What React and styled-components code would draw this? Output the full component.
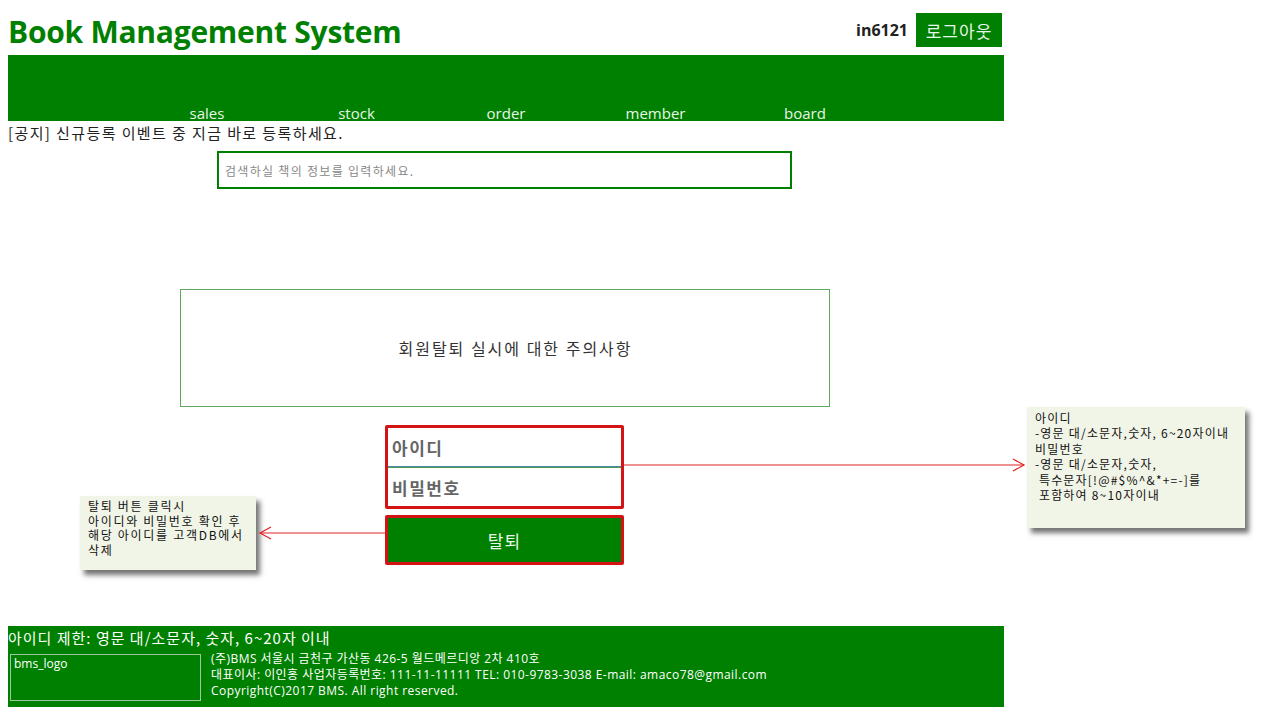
import styled, { createGlobalStyle } from 'styled-components';

const GlobalStyle = createGlobalStyle`
  body {
    margin: 8px;
    background: #fff;
    font-family: "Open Sans", "Noto Sans CJK KR", sans-serif;
    color: #222;
  }
  * { box-sizing: border-box; }
`;

const Stage = styled.div`
  position: relative;
  width: 1264px;
`;

const Wrapper = styled.div`
  width: 996px;
`;

const Header = styled.header`
  display: flex;
  justify-content: space-between;
  align-items: center;
  height: 47px;
`;

const Title = styled.h1`
  margin: 0;
  font-size: 30px;
  font-weight: 700;
  color: #008000;
  letter-spacing: -0.25px;
`;

const UserBox = styled.div`
  display: flex;
  align-items: center;
  gap: 8px;
  margin-right: 2px;
  margin-top: -3px;
`;

const UserId = styled.span`
  font-size: 16px;
  font-weight: 700;
  color: #222;
`;

const LogoutButton = styled.button`
  height: 34px;
  width: 86px;
  border: none;
  background: #008000;
  color: #e8f5e8;
  font-family: "Noto Sans CJK KR", sans-serif;
  font-size: 17px;
  letter-spacing: 1px;
  padding: 0;
`;

const Nav = styled.nav`
  height: 66px;
  background: #008000;
  display: flex;
  justify-content: center;
  align-items: flex-end;
`;

const NavItem = styled.span`
  width: 149.5px;
  text-align: center;
  color: #e8f5e8;
  font-size: 15px;
  line-height: 18px;
  margin-bottom: -1px;
`;

const Notice = styled.p`
  margin: 2px 0 0;
  font-family: "Noto Sans CJK KR", sans-serif;
  font-size: 15px;
  letter-spacing: 1.4px;
  line-height: 20px;
  color: #222;
`;

const SearchRow = styled.div`
  display: flex;
  justify-content: center;
  margin-top: 8px;
  padding-right: 3px;
`;

const SearchInput = styled.input`
  width: 575px;
  height: 38px;
  border: 2px solid #008000;
  padding: 0 6px;
  font-family: "Noto Sans CJK KR", sans-serif;
  font-size: 12px;
  letter-spacing: 1.3px;
  outline: none;
  &::placeholder { color: #888; }
`;

const Center = styled.div`
  display: flex;
  flex-direction: column;
  align-items: center;
  padding-right: 3px;
`;

const CautionBox = styled.div`
  margin-top: 100px;
  width: 650px;
  height: 118px;
  border: 1px solid #5fa65f;
  display: flex;
  align-items: center;
  justify-content: center;
  padding-left: 22px;
  font-family: "Noto Sans CJK KR", sans-serif;
  font-size: 16px;
  letter-spacing: 2px;
  color: #333;
`;

const InputGroup = styled.div`
  margin-top: 18px;
  width: 239px;
  border: 3px solid #d41414;
  border-radius: 2px;
  display: flex;
  flex-direction: column;
`;

const Field = styled.input`
  height: 39px;
  border: none;
  border-bottom: ${(p) => (p.$last ? 'none' : '1px solid #4a8aa8')};
  border-top: ${(p) => (p.$last ? '1px solid #4f9a4f' : 'none')};
  padding: 0 4px;
  font-family: "Noto Sans CJK KR", sans-serif;
  font-size: 17px;
  font-weight: 700;
  letter-spacing: 1.5px;
  outline: none;
  &::placeholder { color: #666; }
`;

const WithdrawButton = styled.button`
  margin-top: 6px;
  width: 239px;
  height: 50px;
  background: #008000;
  border: 3px solid #d41414;
  border-radius: 2px;
  color: #eaf7ea;
  font-family: "Noto Sans CJK KR", sans-serif;
  font-size: 17px;
  letter-spacing: 1px;
`;

const Footer = styled.footer`
  margin-top: 61px;
  background: #008000;
  height: 81px;
  padding: 2px 2px 0;
  color: #fff;
`;

const FooterTitle = styled.div`
  font-family: "Noto Sans CJK KR", sans-serif;
  font-size: 15px;
  letter-spacing: 1px;
  line-height: 20px;
  margin-left: -2px;
`;

const FooterRow = styled.div`
  display: flex;
  gap: 10px;
  margin-top: 6px;
`;

const LogoBox = styled.div`
  width: 191px;
  height: 47px;
  border: 1px solid #a0c8a0;
  padding: 1px 3px;
  font-size: 12px;
  line-height: 16px;
`;

const FooterInfo = styled.div`
  font-size: 12px;
  letter-spacing: 0.45px;
  line-height: 16px;
  margin-top: -3px;
  font-family: "Open Sans", "Noto Sans CJK KR", sans-serif;
`;

const Memo = styled.div`
  position: absolute;
  left: ${(p) => p.$left}px;
  top: ${(p) => p.$top}px;
  width: ${(p) => p.$w}px;
  height: ${(p) => p.$h}px;
  background: #f1f5e8;
  box-shadow: 4px 5px 5px rgba(0, 0, 0, 0.55);
  padding: 3px 8px;
  font-family: "Noto Sans CJK KR", sans-serif;
  font-size: 12px;
  letter-spacing: ${(p) => p.$ls}px;
  line-height: ${(p) => p.$lh}px;
  color: #111;
  white-space: pre;
`;

const Arrows = styled.svg`
  position: absolute;
  left: 0;
  top: 0;
  pointer-events: none;
`;

const navItems = ['sales', 'stock', 'order', 'member', 'board'];

export default function App() {
  return (
    <Stage>
      <GlobalStyle />
      <Wrapper>
        <Header>
          <Title>Book Management System</Title>
          <UserBox>
            <UserId>in6121</UserId>
            <LogoutButton>로그아웃</LogoutButton>
          </UserBox>
        </Header>
        <Nav>
          {navItems.map((item) => (
            <NavItem key={item}>{item}</NavItem>
          ))}
        </Nav>
        <Notice>[공지] 신규등록 이벤트 중 지금 바로 등록하세요.</Notice>
        <SearchRow>
          <SearchInput placeholder="검색하실 책의 정보를 입력하세요." />
        </SearchRow>
        <Center>
          <CautionBox>회원탈퇴 실시에 대한 주의사항</CautionBox>
          <InputGroup>
            <Field placeholder="아이디" />
            <Field $last placeholder="비밀번호" />
          </InputGroup>
          <WithdrawButton>탈퇴</WithdrawButton>
        </Center>
        <Footer>
          <FooterTitle>아이디 제한: 영문 대/소문자, 숫자, 6~20자 이내</FooterTitle>
          <FooterRow>
            <LogoBox>bms_logo</LogoBox>
            <FooterInfo>
              (주)BMS 서울시 금천구 가산동 426-5 월드메르디앙 2차 410호
              <br />
              대표이사: 이인홍 사업자등록번호: 111-11-11111 TEL: 010-9783-3038 E-mail: amaco78@gmail.com
              <br />
              Copyright(C)2017 BMS. All right reserved.
            </FooterInfo>
          </FooterRow>
        </Footer>
      </Wrapper>

      <Memo $left={1019} $top={399} $w={218} $h={121} $lh={15.4} $ls={1.2}>
        {'아이디\n-영문 대/소문자,숫자, 6~20자이내\n비밀번호\n-영문 대/소문자,숫자,\n 특수문자[!@#$%^&*+=-]를\n 포함하여 8~10자이내'}
      </Memo>
      <Memo $left={72} $top={488} $w={176} $h={74} $lh={14.5} $ls={1.7}>
        {'탈퇴 버튼 클릭시\n아이디와 비밀번호 확인 후\n해당 아이디를 고객DB에서\n삭제'}
      </Memo>

      <Arrows width="1264" height="700" viewBox="0 0 1264 700">
        <g stroke="#e02424" strokeWidth="1.2" fill="none">
          <line x1="616" y1="457" x2="1016" y2="457" />
          <polyline points="1005,451 1016,457 1005,463" />
          <line x1="377" y1="525" x2="252" y2="525" />
          <polyline points="263,519 252,525 263,531" />
        </g>
      </Arrows>
    </Stage>
  );
}
